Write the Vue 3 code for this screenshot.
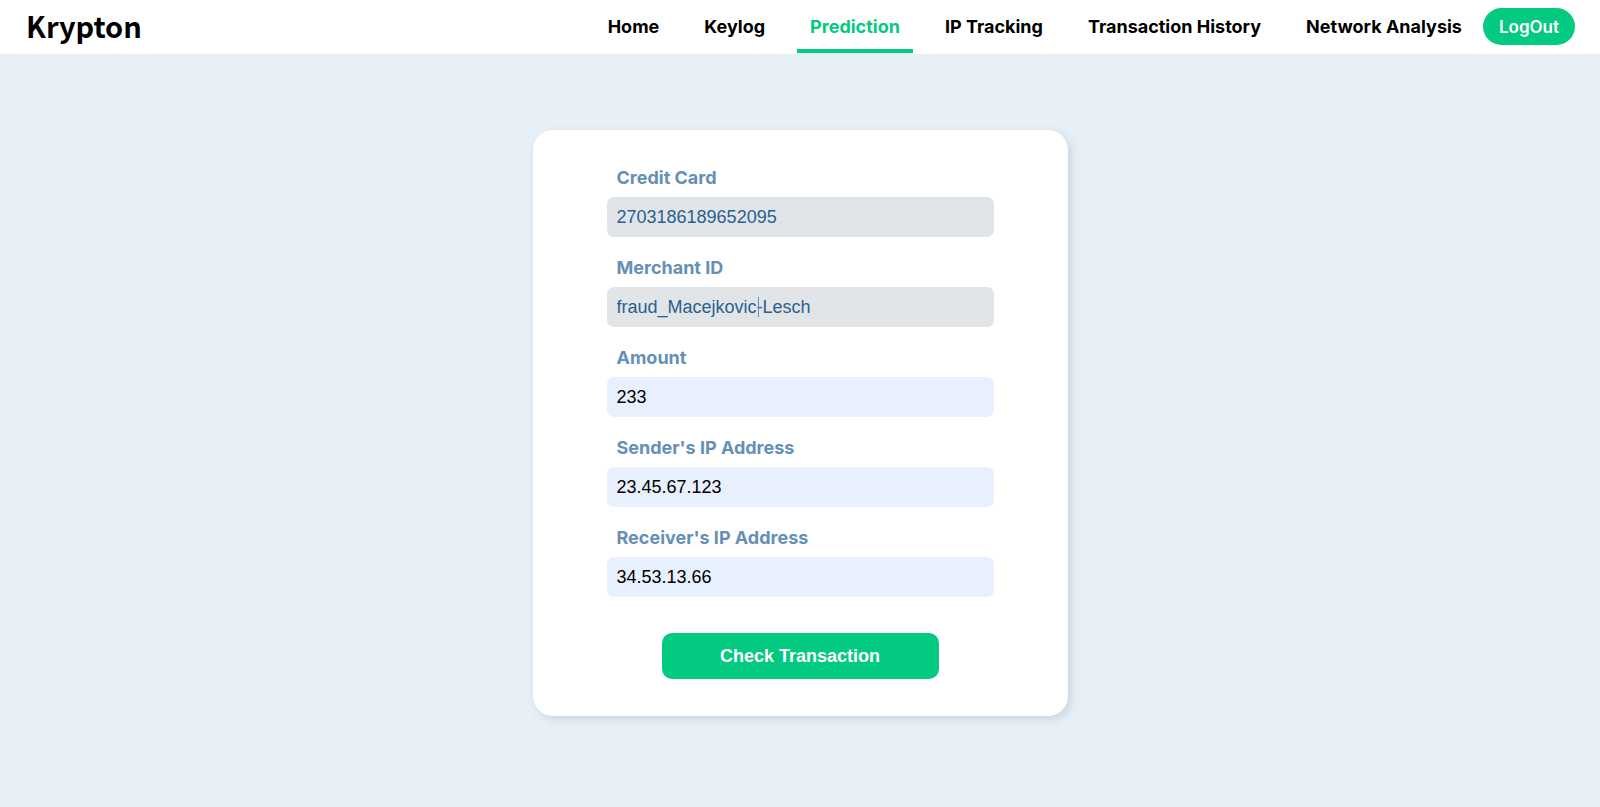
<script setup>
import { reactive } from 'vue'

const links = [
  { label: 'Home' },
  { label: 'Keylog' },
  { label: 'Prediction', active: true },
  { label: 'IP Tracking' },
  { label: 'Transaction History' },
  { label: 'Network Analysis' },
]

const fields = reactive([
  { id: 'card', label: 'Credit Card', value: '2703186189652095' },
  { id: 'merchant', label: 'Merchant ID', value: 'fraud_Macejkovic-Lesch', caret: true },
  { id: 'amount', label: 'Amount', value: '233', filled: true },
  { id: 'sender', label: "Sender's IP Address", value: '23.45.67.123', filled: true },
  { id: 'receiver', label: "Receiver's IP Address", value: '34.53.13.66', filled: true },
])
</script>

<template>
  <div class="page">
    <header class="header">
      <a class="logo" href="#">Krypton</a>
      <nav class="nav">
        <a
          v-for="link in links"
          :key="link.label"
          href="#"
          class="link"
          :class="{ active: link.active }"
        >{{ link.label }}</a>
      </nav>
      <button type="button" class="logout">LogOut</button>
    </header>

    <main class="main">
      <form class="card" @submit.prevent>
        <div v-for="field in fields" :key="field.id" class="field">
          <label class="label" :for="field.id">{{ field.label }}</label>
          <div class="control">
            <input
              :id="field.id"
              v-model="field.value"
              type="text"
              class="input"
              :class="{ filled: field.filled }"
              autocomplete="off"
              spellcheck="false"
            />
            <span v-if="field.caret" class="caret"></span>
          </div>
        </div>
        <button type="submit" class="submit">Check Transaction</button>
      </form>
    </main>
  </div>
</template>

<style>
body {
  margin: 0;
  background: #e8f0f7;
}
</style>

<style scoped>
.page {
  display: flex;
  flex-direction: column;
  min-height: 100vh;
  background: #e8f0f7;
  font-family: Inter, "Liberation Sans", sans-serif;
}

.header {
  display: flex;
  align-items: center;
  padding: 0 25px 1px 26px;
  background: #fff;
}

.logo {
  align-self: flex-start;
  margin-right: auto;
  color: #000;
  font-family: "Noto Sans CJK JP", sans-serif;
  font-size: 29px;
  font-weight: 700;
  line-height: 50px;
  text-decoration: none;
}

.nav {
  display: flex;
  gap: 19px;
  margin-right: 8px;
}

.link {
  box-sizing: border-box;
  height: 53px;
  padding: 0 13px;
  border-bottom: 4px solid transparent;
  color: #000;
  font-size: 18px;
  font-weight: 700;
  line-height: 54px;
  text-decoration: none;
}

.link.active {
  border-bottom-color: #02ca81;
  color: #02ca81;
}

.logout {
  height: 37px;
  padding: 0 16px;
  border: 0;
  border-radius: 19px;
  background: #02ca81;
  color: #fff;
  font-family: inherit;
  font-size: 17px;
  font-weight: 600;
}

.main {
  display: flex;
  flex: 1;
  justify-content: center;
  align-items: flex-start;
  padding: 76px 24px;
}

.card {
  display: flex;
  flex-direction: column;
  gap: 19px;
  box-sizing: border-box;
  width: 100%;
  max-width: 535px;
  padding: 36px 74px 37px;
  border-radius: 20px;
  background: #fff;
  box-shadow: 3px 3px 10px rgba(80, 100, 105, 0.2);
}

.field {
  display: flex;
  flex-direction: column;
  gap: 7px;
}

.label {
  padding-left: 10px;
  color: #658fb7;
  font-size: 18px;
  font-weight: 700;
  line-height: 24px;
}

.control {
  position: relative;
}

.input {
  display: block;
  box-sizing: border-box;
  width: 100%;
  height: 40px;
  padding: 0 10px;
  border: 0;
  border-radius: 7px;
  outline: 0;
  background: #e1e5e8;
  color: #296090;
  font-family: "Liberation Sans", Arial, sans-serif;
  font-size: 18px;
}

.input.filled {
  background: #e8f0fe;
  color: #000;
}

.caret {
  position: absolute;
  top: 10px;
  left: 151px;
  width: 1px;
  height: 20px;
  background: #6d90b0;
}

.submit {
  align-self: center;
  width: 277px;
  height: 46px;
  margin-top: 17px;
  border: 0;
  border-radius: 10px;
  background: #02ca81;
  color: #fff;
  font-family: "Liberation Sans", Arial, sans-serif;
  font-size: 18px;
  font-weight: 700;
}
</style>
